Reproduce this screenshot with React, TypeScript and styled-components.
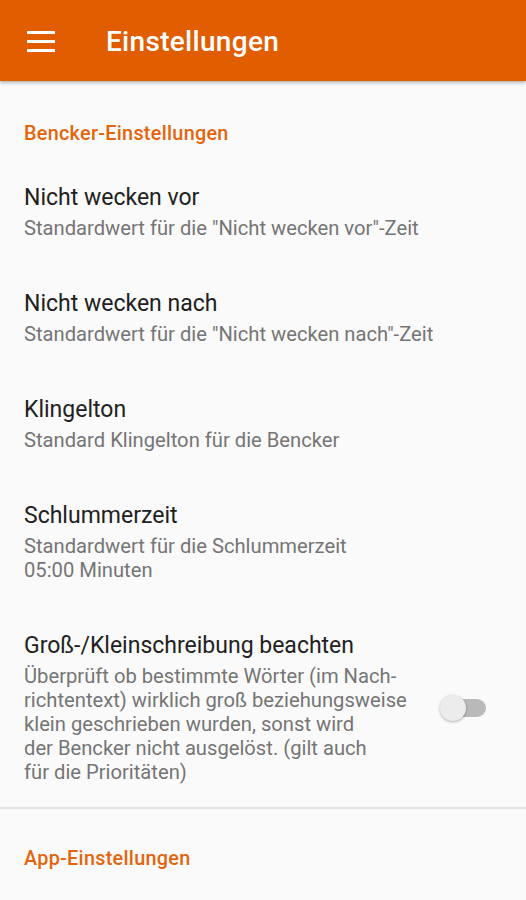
import React from "react";
import styled, { createGlobalStyle } from "styled-components";

const Global = createGlobalStyle`
  html, body { margin: 0; padding: 0; background: #fafafa; }
  body { font-family: Roboto, "Noto Sans", sans-serif; -webkit-font-smoothing: antialiased; }
  * { box-sizing: border-box; }
`;

const Page = styled.div`
  width: 526px;
  height: 900px;
  overflow: hidden;
  background: #fafafa;
  display: flex;
  flex-direction: column;
`;

const Toolbar = styled.header`
  height: 81px;
  flex: 0 0 81px;
  background: #e25c00;
  display: flex;
  align-items: center;
  padding-left: 27px;
  box-shadow: 0 2px 4px rgba(0, 0, 0, 0.22), 0 1px 2px rgba(0, 0, 0, 0.12);
  position: relative;
  z-index: 1;
`;

const MenuButton = styled.div`
  width: 28px;
  height: 21px;
  display: flex;
  flex-direction: column;
  justify-content: space-between;
  margin-top: 1px;
`;

const MenuLine = styled.span`
  display: block;
  height: 3px;
  background: #fff;
  border-radius: 0.5px;
`;

const Title = styled.h1`
  margin: 2px 0 0 51px;
  color: #fff;
  font-size: 28px;
  font-weight: 500;
  letter-spacing: 0.3px;
  line-height: 32px;
`;

const List = styled.div`
  display: flex;
  flex-direction: column;
`;

const Category = styled.div<{ $top: number; $height: number }>`
  padding: ${(p) => p.$top}px 24px 0 24px;
  height: ${(p) => p.$height}px;
  color: #e2650d;
  font-size: 19.8px;
  font-weight: 500;
  letter-spacing: 0.3px;
  line-height: 22px;
`;

const Item = styled.div`
  display: flex;
  align-items: center;
  padding: 27px 24px 23px 24px;
`;

const ItemText = styled.div`
  flex: 1;
  display: flex;
  flex-direction: column;
  gap: 4px;
  white-space: nowrap;
`;

const ItemTitle = styled.div`
  color: #212121;
  font-size: 23px;
  line-height: 28px;
`;

const ItemSummary = styled.div`
  color: #757575;
  font-size: 20.2px;
  line-height: 24px;
`;

const SwitchBox = styled.div`
  width: 47px;
  height: 28px;
  position: relative;
  margin-right: 16px;
  flex: 0 0 auto;
`;

const Track = styled.div`
  position: absolute;
  left: 6px;
  right: 0;
  top: 5px;
  height: 18px;
  border-radius: 9px;
  background: #b9b9b9;
`;

const Thumb = styled.div`
  position: absolute;
  left: 1px;
  top: 1px;
  width: 26px;
  height: 26px;
  border-radius: 50%;
  background: #ececec;
  box-shadow: 0 1px 3px rgba(0, 0, 0, 0.3);
`;

const Divider = styled.div`
  height: 2px;
  background: #e4e4e4;
`;

const items = [
  { title: "Nicht wecken vor", summary: ['Standardwert für die "Nicht wecken vor"-Zeit'] },
  { title: "Nicht wecken nach", summary: ['Standardwert für die "Nicht wecken nach"-Zeit'] },
  { title: "Klingelton", summary: ["Standard Klingelton für die Bencker"] },
  { title: "Schlummerzeit", summary: ["Standardwert für die Schlummerzeit", "05:00 Minuten"] },
];

const caseLines = [
  "Überprüft ob bestimmte Wörter (im Nach-",
  "richtentext) wirklich groß beziehungsweise",
  "klein geschrieben wurden, sonst wird",
  "der Bencker nicht ausgelöst. (gilt auch",
  "für die Prioritäten)",
];

export default function App() {
  return (
    <Page>
      <Global />
      <Toolbar>
        <MenuButton>
          <MenuLine />
          <MenuLine />
          <MenuLine />
        </MenuButton>
        <Title>Einstellungen</Title>
      </Toolbar>
      <List>
        <Category $top={42} $height={76}>Bencker-Einstellungen</Category>
        {items.map((it) => (
          <Item key={it.title}>
            <ItemText>
              <ItemTitle>{it.title}</ItemTitle>
              <ItemSummary>
                {it.summary.map((l, i) => (
                  <React.Fragment key={i}>
                    {i > 0 && <br />}
                    {l}
                  </React.Fragment>
                ))}
              </ItemSummary>
            </ItemText>
          </Item>
        ))}
        <Item>
          <ItemText>
            <ItemTitle>Groß-/Kleinschreibung beachten</ItemTitle>
            <ItemSummary>
              {caseLines.map((l, i) => (
                <React.Fragment key={i}>
                  {i > 0 && <br />}
                  {l}
                </React.Fragment>
              ))}
            </ItemSummary>
          </ItemText>
          <SwitchBox>
            <Track />
            <Thumb />
          </SwitchBox>
        </Item>
        <Divider />
        <Category $top={39} $height={75}>App-Einstellungen</Category>
      </List>
    </Page>
  );
}
